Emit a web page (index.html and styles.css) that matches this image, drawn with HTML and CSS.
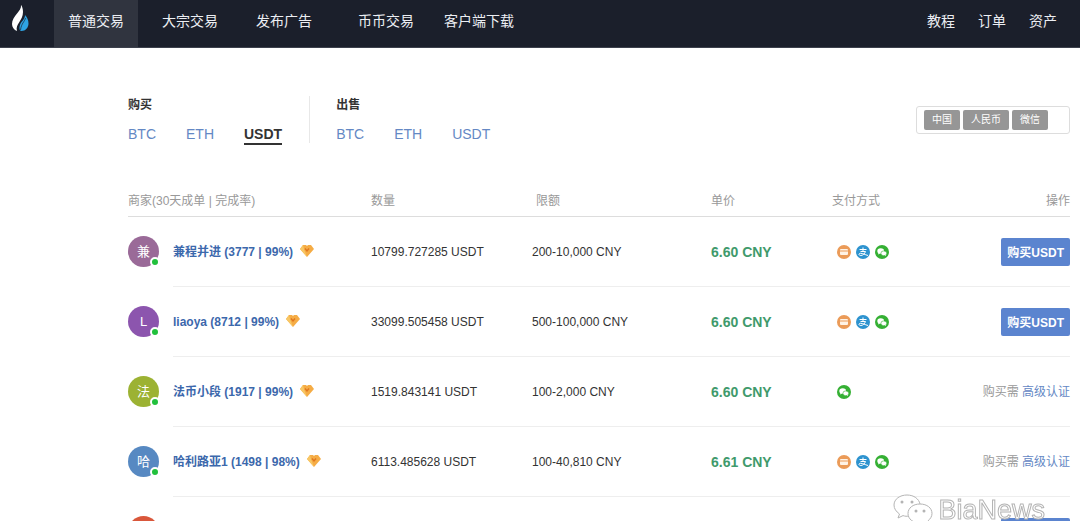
FILE: index.html
```html
<!DOCTYPE html>
<html lang="zh-CN">
<head>
  <meta charset="UTF-8">
  <title>普通交易</title>
  <link rel="stylesheet" href="styles.css">
</head>
<body>
  <!-- shared icons -->
  <svg class="sprite" aria-hidden="true">
    <symbol id="gem" viewBox="0 0 14 12">
      <path d="M3 0h3l1 1 1-1h3l3 4-7 8-7-8z" fill="#f5ac45"/>
      <path d="M3 0L0 4l7 8-3-8z" fill="#f8c765"/>
      <path d="M5 3.500l2 2.500 2-2.500" fill="none" stroke="#e0761f" stroke-width="1.400"/>
    </symbol>
    <symbol id="card" viewBox="0 0 14 14">
      <circle cx="7" cy="7" r="7" fill="#eb9b58"/>
      <rect x="3" y="4" width="8" height="6" rx="1" fill="#fff3e6"/>
      <path d="M3 6h8" stroke="#eb9b58" stroke-width="1"/>
    </symbol>
    <symbol id="alipay" viewBox="0 0 14 14">
      <circle cx="7" cy="7" r="7" fill="#2d93cf"/>
      <path d="M3.500 4.500h7M7 2.500v4M4.500 6.500h5C8.800 8.500 7 10.500 4.800 10.500c-2.300 0-2.400-2.200-.3-2.200 2.200 0 4.500 1.400 7.500 2.200" fill="none" stroke="#fff" stroke-width="1"/>
    </symbol>
    <symbol id="wechat" viewBox="0 0 14 14">
      <circle cx="7" cy="7" r="7" fill="#35b034"/>
      <ellipse cx="5.700" cy="6" rx="3.400" ry="2.800" fill="#fff"/>
      <path d="M3.500 7.500l-.4 2 2-1z" fill="#fff"/>
      <ellipse cx="8.800" cy="8.300" rx="2.900" ry="2.400" fill="#fff" stroke="#35b034" stroke-width=".6"/>
      <path d="M10 10l1 1.200-.1-2z" fill="#fff"/>
    </symbol>
  </svg>

  <header class="topbar">
    <a class="logo" href="#" aria-label="首页">
      <svg width="18" height="27" viewBox="0 0 18 27">
        <path d="M10 0C11 6 1 11 1 19c0 3 2 6 5 7-2-7 6-10 6-19 0-3-1-6-2-7z" fill="#fff"/>
        <path d="M14 10c2 2 3.500 5 3.500 8.500 0 4-3 7.500-7 7.500-2 0-2.500-3-1.500-6 1-4 5-5 5-10z" fill="#2ea3e3"/>
        <path d="M14.500 13c-1 4-4 5-5 12" fill="none" stroke="#1b1f2b" stroke-width=".7"/>
      </svg>
    </a>
    <nav class="menu">
      <a class="active" href="#">普通交易</a>
      <a href="#">大宗交易</a>
      <a href="#">发布广告</a>
    </nav>
    <nav class="menu menu-more">
      <a href="#">币币交易</a>
      <a href="#">客户端下载</a>
    </nav>
    <nav class="menu-user">
      <a href="#">教程</a>
      <a href="#">订单</a>
      <a href="#">资产</a>
    </nav>
  </header>

  <main class="content">
    <div class="filters">
      <section class="side">
        <h2>购买</h2>
        <div class="coins">
          <a href="#">BTC</a>
          <a href="#">ETH</a>
          <a class="selected" href="#">USDT</a>
        </div>
      </section>
      <section class="side sell">
        <h2>出售</h2>
        <div class="coins">
          <a href="#">BTC</a>
          <a href="#">ETH</a>
          <a href="#">USDT</a>
        </div>
      </section>
      <div class="tags">
        <button type="button">中国</button>
        <button type="button">人民币</button>
        <button type="button">微信</button>
      </div>
    </div>

    <table class="offers">
      <colgroup>
        <col class="col-avatar">
        <col class="col-name">
        <col class="col-amount">
        <col class="col-limit">
        <col class="col-price">
        <col class="col-pay">
        <col>
      </colgroup>
      <thead>
        <tr>
          <th colspan="2">商家(30天成单 | 完成率)</th>
          <th>数量</th>
          <th class="limit-head">限额</th>
          <th>单价</th>
          <th>支付方式</th>
          <th class="action">操作</th>
        </tr>
      </thead>
      <tbody>
        <tr>
          <td class="who"><span class="avatar plum">兼</span></td>
          <td class="name"><a href="#">兼程并进 (3777 | 99%)</a><svg class="gem"><use href="#gem"/></svg></td>
          <td>10799.727285 USDT</td>
          <td>200-10,000 CNY</td>
          <td class="price">6.60 CNY</td>
          <td><div class="pay"><svg><use href="#card"/></svg><svg><use href="#alipay"/></svg><svg><use href="#wechat"/></svg></div></td>
          <td class="action"><button class="buy" type="button">购买USDT</button></td>
        </tr>
        <tr>
          <td class="who"><span class="avatar purple">L</span></td>
          <td class="name"><a href="#">liaoya (8712 | 99%)</a><svg class="gem"><use href="#gem"/></svg></td>
          <td>33099.505458 USDT</td>
          <td>500-100,000 CNY</td>
          <td class="price">6.60 CNY</td>
          <td><div class="pay"><svg><use href="#card"/></svg><svg><use href="#alipay"/></svg><svg><use href="#wechat"/></svg></div></td>
          <td class="action"><button class="buy" type="button">购买USDT</button></td>
        </tr>
        <tr>
          <td class="who"><span class="avatar olive">法</span></td>
          <td class="name"><a href="#">法币小段 (1917 | 99%)</a><svg class="gem"><use href="#gem"/></svg></td>
          <td>1519.843141 USDT</td>
          <td>100-2,000 CNY</td>
          <td class="price">6.60 CNY</td>
          <td><div class="pay"><svg><use href="#wechat"/></svg></div></td>
          <td class="action">购买需 <a href="#">高级认证</a></td>
        </tr>
        <tr>
          <td class="who"><span class="avatar blue">哈</span></td>
          <td class="name"><a href="#">哈利路亚1 (1498 | 98%)</a><svg class="gem"><use href="#gem"/></svg></td>
          <td>6113.485628 USDT</td>
          <td>100-40,810 CNY</td>
          <td class="price">6.61 CNY</td>
          <td><div class="pay"><svg><use href="#card"/></svg><svg><use href="#alipay"/></svg><svg><use href="#wechat"/></svg></div></td>
          <td class="action">购买需 <a href="#">高级认证</a></td>
        </tr>
        <tr>
          <td class="who"><span class="avatar red"></span></td>
          <td></td>
          <td></td>
          <td></td>
          <td></td>
          <td></td>
          <td class="action"><button class="buy" type="button">购买USDT</button></td>
        </tr>
      </tbody>
    </table>
  </main>

  <div class="watermark">
    <svg width="40" height="32" viewBox="0 0 40 32">
      <path d="M16 22c-2 .5-4 .3-6-.4L5 24l1.500-4C3 17.500 1 14.500 1 11 1 5 7 1 14 1s12 4 13 9" />
      <path d="M27 10c-7 0-12 4-12 9.500S20 29 27 29c2 0 3-.2 4.500-.8L36 31l-1.200-4c2.500-2 4.200-4.500 4.200-7.500C39 14 34 10 27 10z" />
      <g class="eyes"><circle cx="9" cy="8" r="1.500"/><circle cx="19" cy="8" r="1.500"/><circle cx="23" cy="17" r="1.500"/><circle cx="31" cy="17" r="1.500"/></g>
    </svg>
    <span>BiaNews</span>
  </div>
</body>
</html>
```

FILE: styles.css
```css
*, *::after { box-sizing: border-box; }
body { margin: 0; height: 100vh; overflow: hidden; background: #fff; color: #333; font: 12px/18px "Liberation Sans", "Noto Sans CJK SC", sans-serif; }
a { text-decoration: none; color: #6488c4; }
button { font-family: inherit; border: 0; cursor: pointer; }
.sprite { position: absolute; width: 0; height: 0; }

/* top bar */
.topbar { display: flex; height: 48px; background: #1b1f2b; border-bottom: 1px solid #3d414d; font-size: 14px; line-height: 42px; }
.topbar a { color: #eceef3; }
.logo { width: 54px; padding: 5px 0 0 11px; line-height: 0; }
.menu { display: flex; gap: 10px; }
.menu a { padding: 0 14px; }
.menu .active { background: #30343f; }
.menu-more { margin-left: 18px; gap: 2px; }
.menu-user { display: flex; gap: 23px; margin-left: auto; padding-right: 23px; }

.content { padding: 48px 10px 0 128px; }

/* coin filters */
.filters { display: flex; align-items: flex-start; height: 88px; }
.side h2 { margin: 0 0 11px; font-size: 12px; line-height: 18px; color: #333; }
.coins { display: flex; gap: 30px; font-size: 14px; line-height: 18px; }
.coins .selected { color: #333; font-weight: bold; border-bottom: 2px solid #333; }
.sell { margin-left: 27px; padding-left: 26px; border-left: 1px solid #e8e8e8; }
.tags { display: flex; gap: 3px; width: 154px; margin: 10px 0 0 auto; padding: 3px 7px; border: 1px solid #ddd; border-radius: 3px; }
.tags button { height: 20px; padding: 0 8px; border-radius: 2px; background: #969696; color: #fff; font-size: 10px; line-height: 20px; }

/* offers */
.offers { width: 100%; table-layout: fixed; border-collapse: separate; border-spacing: 0; }
.offers th, .offers td { padding: 0; text-align: left; white-space: nowrap; }
.offers th { height: 33px; padding-top: 2px; border-bottom: 1px solid #ddd; color: #999; font-weight: normal; }
.offers td { height: 70px; border-bottom: 1px solid #eee; vertical-align: middle; }
.offers .who { border-bottom-color: transparent; }
.offers .limit-head { padding-left: 4px; }
.offers .action { text-align: right; color: #999; }
.col-avatar { width: 45px; }
.col-name { width: 198px; }
.col-amount { width: 161px; }
.col-limit { width: 179px; }
.col-price { width: 121px; }
.col-pay { width: 110px; }

.avatar { display: block; position: relative; width: 31px; height: 31px; border-radius: 50%; color: #fff; font-size: 13px; line-height: 31px; text-align: center; }
.avatar::after { content: ""; position: absolute; right: -1px; bottom: 0; width: 10px; height: 10px; border: 2px solid #fff; border-radius: 50%; background: #21c03c; }
.plum { background: #9a6a98; }
.purple { background: #8c55ae; }
.olive { background: #9cb233; }
.blue { background: #5789c2; }
.red { background: #d9573b; }

.name a { color: #3c68ac; font-weight: bold; }
.gem { width: 14px; height: 12px; margin-left: 7px; vertical-align: -1px; }
.offers .price { color: #3f9a6c; font-size: 14px; font-weight: bold; }
.pay { display: flex; gap: 5px; padding-left: 5px; }
.pay svg { width: 14px; height: 14px; }
.buy { height: 28px; padding: 0 6px; border-radius: 2px; background: #5b84cf; color: #fff; font-size: 12px; font-weight: bold; }

/* watermark */
.watermark { position: fixed; right: 35px; bottom: -5px; display: flex; align-items: center; gap: 5px; color: #fff; font-size: 27px; line-height: 32px; -webkit-text-stroke: 1px #b4b4b4; }
.watermark svg { fill: #fff; stroke: #b4b4b4; }
.watermark .eyes { fill: #b4b4b4; stroke: none; }
```
